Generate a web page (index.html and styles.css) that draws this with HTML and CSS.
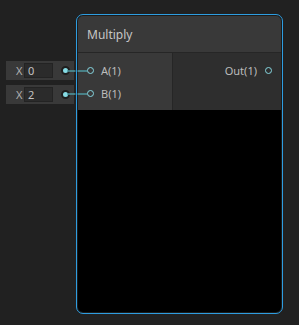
FILE: index.html
```html
<!DOCTYPE html>
<html lang="en">
<head>
    <meta charset="UTF-8">
    <title>Multiply node</title>
    <link rel="stylesheet" href="styles.css">
</head>
<body>

    <div class="field field-a">
        <span class="field-label">X</span>
        <span class="field-input">0</span>
        <span class="field-dot"></span>
    </div>
    <div class="field field-b">
        <span class="field-label">X</span>
        <span class="field-input">2</span>
        <span class="field-dot"></span>
    </div>

    <div class="node">
        <div class="node-title">Multiply</div>
        <div class="node-ports">
            <div class="ports-in">
                <div class="port"><span class="port-dot"></span><span>A(1)</span></div>
                <div class="port"><span class="port-dot"></span><span>B(1)</span></div>
            </div>
            <div class="ports-out">
                <div class="port port-right"><span>Out(1)</span><span class="port-dot"></span></div>
            </div>
        </div>
        <div class="node-preview"></div>
    </div>

    <svg class="wires" width="299" height="325">
        <line x1="67" y1="71" x2="75.5" y2="71" />
        <line x1="77.5" y1="71" x2="87" y2="71" />
        <line x1="67" y1="94" x2="75.5" y2="94" />
        <line x1="77.5" y1="94" x2="87" y2="94" />
    </svg>

</body>
</html>
```

FILE: styles.css
```css
body {
    margin: 0;
    width: 299px;
    height: 325px;
    background-color: #212121;
    font-family: "Noto Sans", "Open Sans", sans-serif;
    font-size: 11px;
    color: #bcbcbc;
    position: relative;
    overflow: hidden;
}

/* inline value fields on the canvas */
.field {
    position: absolute;
    left: 6px;
    width: 68px;
    height: 19px;
    background-color: #393939;
    display: flex;
    align-items: center;
    box-sizing: border-box;
    padding-left: 10px;
}

.field-a { top: 61px; }
.field-b { top: 85px; }

.field-label {
    width: 8px;
    color: #b0b0b0;
}

.field-input {
    width: 29px;
    height: 15px;
    margin-left: 0;
    background-color: #2b2b2b;
    border: 1px solid #232323;
    box-sizing: border-box;
    padding-left: 3px;
    line-height: 13px;
    color: #c2c2c2;
}

.field-dot {
    width: 5px;
    height: 5px;
    margin-left: 8px;
    border-radius: 50%;
    background-color: #86dbe4;
    border: 2px solid #1e1e1e;
}

/* node */
.node {
    position: absolute;
    left: 76px;
    top: 14px;
    width: 203px;
    height: 296px;
    padding: 1px;
    border: 1px solid #2e9de0;
    border-radius: 7px;
    background-color: #1b1b1b;
    display: flex;
    flex-direction: column;
}

.node-title {
    height: 36px;
    background-color: #393939;
    border-radius: 5px 5px 0 0;
    padding-left: 9px;
    display: flex;
    align-items: center;
    font-size: 12px;
    color: #c6c6c6;
    border-bottom: 1px solid #262626;
}

.node-ports {
    display: flex;
    height: 57px;
}

.ports-in {
    width: 95px;
    background-color: #393939;
    border-right: 1px solid #262626;
    padding-top: 6px;
    box-sizing: border-box;
}

.ports-out {
    flex: 1;
    background-color: #2e2e2e;
    padding-top: 6px;
    box-sizing: border-box;
}

.port {
    height: 23px;
    display: flex;
    align-items: center;
    padding-left: 9px;
    gap: 7px;
}

.port-right {
    justify-content: flex-end;
    padding-left: 0;
    padding-right: 9px;
    gap: 8px;
}

.port-dot {
    width: 5px;
    height: 5px;
    border: 1.5px solid #86d6e0;
    border-radius: 50%;
}

.node-preview {
    flex: 1;
    background-color: #000;
    border-radius: 0 0 5px 5px;
}

.wires {
    position: absolute;
    left: 0;
    top: 0;
    pointer-events: none;
}

.wires line {
    stroke: #4f9aa2;
    stroke-width: 1.5;
}
```
